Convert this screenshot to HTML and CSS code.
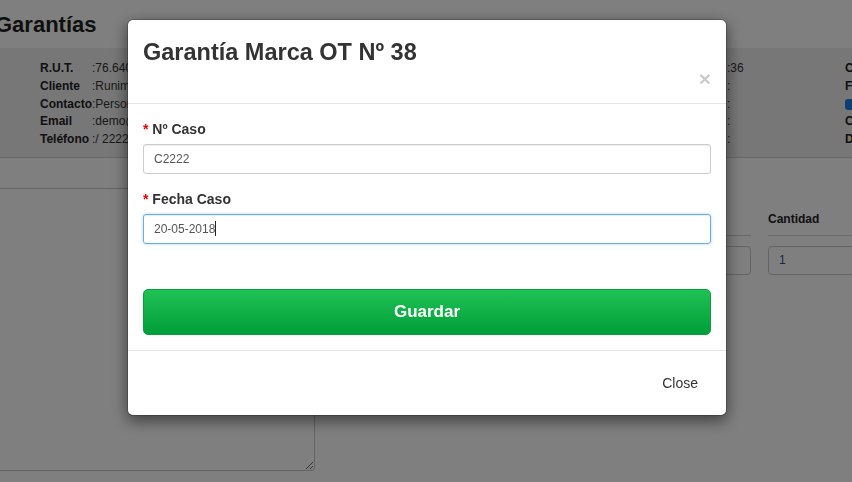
FILE: index.html
```html
<!DOCTYPE html>
<html lang="es">
<head>
<meta charset="utf-8">
<title>Garantías</title>
<link rel="stylesheet" href="styles.css">
</head>
<body>
<div class="page">
  <header class="page-head">
    <h1 class="page-title">Garantías</h1>
  </header>
  <section class="info-band">
    <div class="info-col info-left">
      <div class="info-row"><span class="info-label">R.U.T.</span><span class="info-value">:76.640.226-5</span></div>
      <div class="info-row"><span class="info-label">Cliente</span><span class="info-value">:Runimark SpA</span></div>
      <div class="info-row"><span class="info-label">Contacto</span><span class="info-value">:Persona Contacto</span></div>
      <div class="info-row"><span class="info-label">Email</span><span class="info-value">:demo@runimark.cl</span></div>
      <div class="info-row"><span class="info-label">Teléfono</span><span class="info-value">:/ 22222222</span></div>
    </div>
    <div class="info-col info-mid">
      <div class="info-row"><span class="info-value">:36</span></div>
      <div class="info-row"><span class="info-value">:</span></div>
      <div class="info-row"><span class="info-value">:</span></div>
      <div class="info-row"><span class="info-value">:</span></div>
      <div class="info-row"><span class="info-value">:</span></div>
    </div>
    <div class="info-col info-right">
      <div class="info-row"><span class="info-label">Creado</span></div>
      <div class="info-row"><span class="info-label">Fecha</span></div>
      <div class="info-row"><span class="check"></span></div>
      <div class="info-row"><span class="info-label">Comuna</span></div>
      <div class="info-row"><span class="info-label">Dirección</span></div>
    </div>
  </section>
  <main class="main">
    <div class="notes-col">
      <textarea class="notes"></textarea>
    </div>
    <div class="items">
      <div class="items-head">
        <div class="th"></div>
        <div class="th">Cantidad</div>
      </div>
      <div class="items-row">
        <div class="cell-input"></div>
        <div class="cell-input qty">1</div>
      </div>
    </div>
  </main>
</div>

<div class="backdrop"></div>

<div class="modal" role="dialog">
  <div class="modal-header">
    <h4 class="modal-title">Garantía Marca OT Nº 38</h4>
    <div class="close-row"><span class="close-x">×</span></div>
  </div>
  <div class="modal-body">
    <div class="form-group">
      <label class="form-label"><span class="req">*</span> Nº Caso</label>
      <div class="form-control">C2222</div>
    </div>
    <div class="form-group">
      <label class="form-label"><span class="req">*</span> Fecha Caso</label>
      <div class="form-control focused">20-05-2018<span class="caret"></span></div>
    </div>
    <button class="btn-save" type="button">Guardar</button>
  </div>
  <div class="modal-footer">
    <button class="btn-close" type="button">Close</button>
  </div>
</div>
</body>
</html>
```
FILE: styles.css
```css
html, body {
  margin: 0;
  padding: 0;
}
body {
  font-family: "Liberation Sans", Arial, Helvetica, sans-serif;
  font-size: 12px;
  color: #333;
  background: #fff;
  width: 852px;
  height: 482px;
  overflow: hidden;
}
.page {
  width: 900px;
}
.page-head {
  height: 48px;
  display: flex;
  align-items: center;
}
.page-title {
  margin: 0 0 0 -5px;
  font-size: 22px;
  font-weight: bold;
  color: #1e1e1e;
  line-height: 28px;
  padding-top: 2px;
}
.info-band {
  height: 110px;
  background: #eeeeee;
  border-bottom: 1px solid #cfcfcf;
  display: flex;
  box-sizing: border-box;
  padding-top: 12px;
}
.info-col {
  display: flex;
  flex-direction: column;
}
.info-left {
  margin-left: 40px;
  width: 687px;
}
.info-mid {
  width: 118px;
}
.info-row {
  display: flex;
  height: 17.75px;
  line-height: 17.75px;
  white-space: nowrap;
  align-items: center;
}
.info-label {
  font-weight: bold;
  width: 52px;
  color: #222;
}
.info-value {
  color: #333;
}
.check {
  width: 11px;
  height: 11px;
  border-radius: 3px;
  background: #1f7fe0;
}
.main {
  display: grid;
  grid-template-columns: 317px 426px 120px;
  column-gap: 10px;
  margin-left: -2px;
  height: 324px;
}
.notes-col {
  padding-top: 30px;
}
.notes {
  display: block;
  box-sizing: border-box;
  width: 317px;
  height: 283px;
  border: 1px solid #c8c8c8;
  border-radius: 3px;
  margin: 0;
  resize: both;
  background: #fff;
}
.items {
  grid-column: 2 / 4;
  display: grid;
  grid-template-columns: 426px 120px;
  column-gap: 17px;
  align-content: start;
}
.items-head {
  display: contents;
}
.th {
  height: 78px;
  box-sizing: border-box;
  border-bottom: 1px solid #cfcfcf;
  font-weight: bold;
  color: #222;
  padding-top: 53px;
  line-height: 16px;
}
.items-row {
  display: contents;
}
.cell-input {
  margin-top: 10px;
  height: 29px;
  box-sizing: border-box;
  border: 1px solid #c8c8c8;
  border-radius: 4px;
  background: #fff;
  padding-left: 10px;
  line-height: 27px;
  color: #2c4a9e;
}
.backdrop {
  position: fixed;
  inset: 0;
  background: rgba(0, 0, 0, 0.5);
}
.modal {
  position: fixed;
  top: 19px;
  left: 127px;
  width: 600px;
  box-sizing: border-box;
  background: #fff;
  border: 1px solid rgba(0, 0, 0, 0.2);
  border-radius: 6px;
  box-shadow: 0 5px 15px rgba(0, 0, 0, 0.5);
  background-clip: padding-box;
}
.modal-header {
  padding: 16px 15px 14px;
  border-bottom: 1px solid #e5e5e5;
}
.modal-title {
  margin: 0;
  font-size: 23.5px;
  font-weight: bold;
  line-height: 33px;
  color: #333;
}
.close-row {
  display: flex;
  justify-content: flex-end;
  height: 20px;
}
.close-x {
  font-size: 21px;
  font-weight: bold;
  line-height: 20px;
  color: #000;
  opacity: 0.2;
}
.modal-body {
  padding: 15px;
}
.form-group {
  margin-bottom: 15px;
}
.form-label {
  display: block;
  font-size: 14px;
  font-weight: bold;
  line-height: 20px;
  margin-bottom: 5px;
  color: #333;
}
.req {
  color: #e00;
}
.form-control {
  height: 30px;
  box-sizing: border-box;
  border: 1px solid #cccccc;
  border-radius: 3px;
  padding: 0 10px;
  font-size: 12px;
  line-height: 28px;
  color: #555;
  box-shadow: inset 0 1px 1px rgba(0, 0, 0, 0.075);
}
.form-control.focused {
  border-color: #66afe9;
  box-shadow: inset 0 1px 1px rgba(0, 0, 0, 0.075), 0 0 3px rgba(102, 175, 233, 0.6);
}
.caret {
  display: inline-block;
  width: 1px;
  height: 15px;
  background: #222;
  vertical-align: -3px;
}
.btn-save {
  display: block;
  width: 100%;
  margin-top: 45px;
  height: 46px;
  border: 1px solid #07a03d;
  border-radius: 5px;
  background: linear-gradient(#1fc255, #009e38);
  color: #fff;
  font-family: inherit;
  font-size: 17px;
  font-weight: bold;
  line-height: 24px;
  padding: 0;
}
.modal-footer {
  border-top: 1px solid #e5e5e5;
  padding: 15px;
  display: flex;
  justify-content: flex-end;
}
.btn-close {
  height: 34px;
  border: 1px solid transparent;
  background: transparent;
  font-family: inherit;
  font-size: 14px;
  color: #333;
  padding: 0 12px;
}
```
